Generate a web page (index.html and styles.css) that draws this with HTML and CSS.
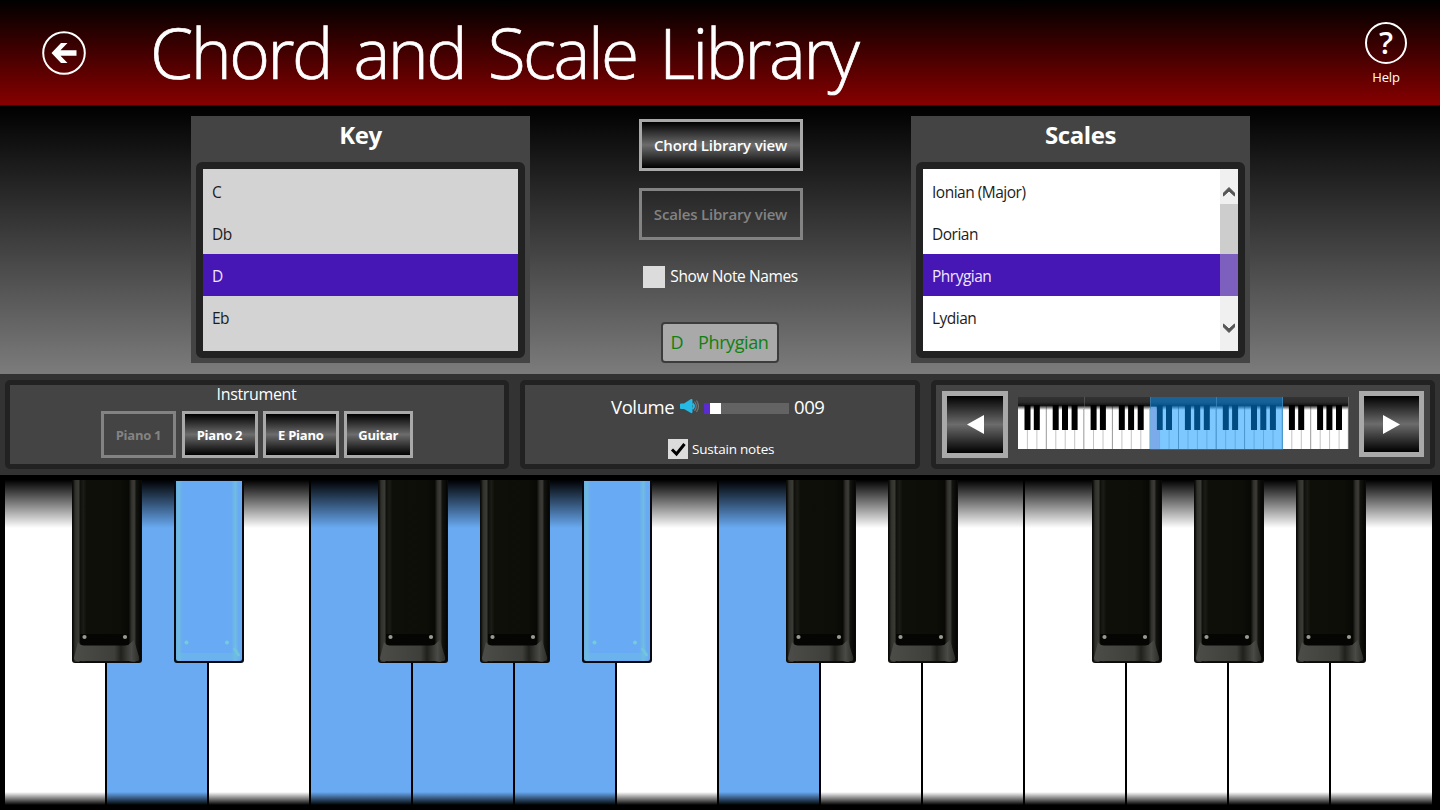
FILE: index.html
```html
<!DOCTYPE html>
<html lang="en">
<head>
    <meta charset="UTF-8">
    <meta name="viewport" content="width=device-width, initial-scale=1.0">
    <title>Chord and Scale Library</title>
    <link rel="stylesheet" href="styles.css">
</head>
<body>
    <!-- shared shapes -->
    <svg class="defs" width="0" height="0">
        <defs>
            <linearGradient id="body-dark" x1="0" x2="1" y1="0" y2="0">
                <stop offset="0" stop-color="#0b0b09"/>
                <stop offset="0.03" stop-color="#2f2f2b"/>
                <stop offset="0.08" stop-color="#3b3b36"/>
                <stop offset="0.11" stop-color="#10100c"/>
                <stop offset="0.15" stop-color="#1c1c17"/>
                <stop offset="0.2" stop-color="#0e0f08"/>
                <stop offset="0.7" stop-color="#0d0e08"/>
                <stop offset="0.82" stop-color="#080805"/>
                <stop offset="0.86" stop-color="#302f2b"/>
                <stop offset="0.9" stop-color="#3e3e39"/>
                <stop offset="0.93" stop-color="#12120f"/>
                <stop offset="1" stop-color="#050504"/>
            </linearGradient>
            <linearGradient id="body-lit" x1="0" x2="1" y1="0" y2="0">
                <stop offset="0" stop-color="#6ab2e6"/>
                <stop offset="0.04" stop-color="#6fbbe0"/>
                <stop offset="0.1" stop-color="#69aaf4"/>
                <stop offset="0.84" stop-color="#69aaf4"/>
                <stop offset="0.9" stop-color="#6fbde0"/>
                <stop offset="0.95" stop-color="#69aaf4"/>
                <stop offset="1" stop-color="#69aaf4"/>
            </linearGradient>
            <linearGradient id="lip" x1="0" x2="1" y1="0" y2="0">
                <stop offset="0" stop-color="#4c4c48"/>
                <stop offset="0.62" stop-color="#3e3e3a"/>
                <stop offset="0.72" stop-color="#20201c"/>
                <stop offset="0.88" stop-color="#4a4a46"/>
                <stop offset="1" stop-color="#2c2c28"/>
            </linearGradient>
            <linearGradient id="mini-shade" x1="0" x2="0" y1="0" y2="1">
                <stop offset="0" stop-color="#333"/>
                <stop offset="0.4" stop-color="#2c2c2c"/>
                <stop offset="0.65" stop-color="#101010"/>
                <stop offset="1" stop-color="#222" stop-opacity="0"/>
            </linearGradient>
        </defs>
        <symbol id="key-dark" viewBox="0 0 70 183">
            <path d="M0 0H70V180Q70 183 67 183H3Q0 183 0 180Z" fill="#0a0a08"/>
            <path d="M1 0H69V179Q69 182 66 182H4Q1 182 1 179Z" fill="url(#body-dark)"/>
            <path d="M6 162L9 165H56L62 160L67 177Q68 181 65 181H5Q2 181 2 178Z" fill="url(#lip)"/>
            <path d="M8 154H57V162Q57 165.500 53 165.500H12Q8 165.500 8 161Z" fill="#050503"/>
            <circle cx="12.5" cy="157" r="2.100" fill="#9a9a92"/>
            <circle cx="53" cy="157" r="2.100" fill="#9a9a92"/>
        </symbol>
        <symbol id="key-lit" viewBox="0 0 70 183">
            <path d="M0 0H70V180Q70 183 67 183H3Q0 183 0 180Z" fill="#060a10"/>
            <path d="M2 1H68V179Q68 181 66 181H4Q2 181 2 179Z" fill="url(#body-lit)"/>
            <path d="M4 173H66V180H4Z" fill="#6ebbe4" opacity="0.5"/>
            <path d="M60 168L65 176" stroke="#72c6da" stroke-width="3"/>
            <circle cx="12.5" cy="162.500" r="2" fill="#73cdd8"/>
            <circle cx="53" cy="162.500" r="2" fill="#73cdd8"/>
        </symbol>
        <symbol id="octave" viewBox="0 0 66.1 52">
            <rect width="66.1" height="52" fill="#fff"/>
            <path d="M9.400 8V52M18.900 8V52M37.800 8V52M47.200 8V52M56.700 8V52" stroke="#c4c4c4"/>
            <path d="M28.300 8V52" stroke="#999"/>
            <path d="M66 12V52" stroke="#777"/>
            <rect width="66.1" height="13" fill="url(#mini-shade)"/>
            <path d="M6.500 8H12.500V33H6.500ZM15.800 8H21.800V33H15.800ZM34.700 8H40.700V33H34.700ZM44 8H50V33H44ZM53.600 8H59.600V33H53.600Z" fill="#000"/>
        </symbol>
    </svg>

    <header class="header">
        <svg class="back" viewBox="0 0 44 44">
            <circle cx="22" cy="22" r="20.8" fill="none" stroke="#fff" stroke-width="2"/>
            <path d="M9.500 22L19 12H25.500L18.500 19.300H34.500V24.700H18.500L25.500 32H19Z" fill="#fff"/>
        </svg>
        <h1>Chord and Scale Library</h1>
        <div class="help">
            <div class="help-icon">?</div>
            <span>Help</span>
        </div>
    </header>

    <main class="library">
        <section class="panel">
            <h2>Key</h2>
            <div class="list list-key">
                <div class="item">C</div>
                <div class="item">Db</div>
                <div class="item selected">D</div>
                <div class="item">Eb</div>
            </div>
        </section>

        <section class="views">
            <button class="btn view-btn">Chord Library view</button>
            <button class="btn view-btn disabled">Scales Library view</button>
            <div class="check check-names"><span class="box"></span><span>Show Note Names</span></div>
            <div class="current"><span>D</span><span>Phrygian</span></div>
        </section>

        <section class="panel">
            <h2>Scales</h2>
            <div class="list list-scales">
                <div class="item">Ionian (Major)</div>
                <div class="item">Dorian</div>
                <div class="item selected">Phrygian</div>
                <div class="item">Lydian</div>
                <div class="scrollbar">
                    <svg class="arrow" viewBox="0 0 18 35"><path d="M3.500 27V24L9 18.500L14.500 24V27L9 22Z" fill="#555" stroke="#555"/></svg>
                    <div class="thumb"></div>
                    <svg class="arrow arrow-down" viewBox="0 0 18 35"><path d="M3.500 27V24L9 18.500L14.500 24V27L9 22Z" fill="#555" stroke="#555"/></svg>
                </div>
            </div>
        </section>
    </main>

    <div class="controls">
        <section class="box-panel instrument">
            <div class="label">Instrument</div>
            <div class="buttons">
                <button class="btn piano1 disabled">Piano 1</button>
                <button class="btn piano2">Piano 2</button>
                <button class="btn epiano">E Piano</button>
                <button class="btn guitar">Guitar</button>
            </div>
        </section>

        <section class="box-panel sound">
            <div class="volume">
                <span class="volume-label">Volume</span>
                <svg class="speaker" viewBox="0 0 21 18">
                    <path d="M1 7.500Q1 6.500 2 6.500H5L12 2Q13.500 1.500 13.500 3V15Q13.500 16.500 12 16L5 12H2Q1 12 1 11Z" fill="#25b9e6"/>
                    <path d="M13.500 6.500Q16.500 9 13.500 12" fill="none" stroke="#25b9e6" stroke-width="2"/>
                    <path d="M15.500 4.500Q19 9 15.500 14M17.500 3.500Q21.500 9 17.500 15" fill="none" stroke="#777" stroke-width="1.200"/>
                </svg>
                <div class="slider"><div class="fill"></div><div class="knob"></div></div>
                <span class="volume-value">009</span>
            </div>
            <div class="check check-sustain">
                <span class="box"><svg viewBox="0 0 20 20"><path d="M4 10.500L8.500 15L16.500 5" fill="none" stroke="#000" stroke-width="3"/></svg></span>
                <span>Sustain notes</span>
            </div>
        </section>

        <section class="box-panel range">
            <button class="btn nav"><svg viewBox="0 0 17 19"><path d="M0 9.500L17 0V19Z" fill="#fff"/></svg></button>
            <svg class="mini" viewBox="0 0 331 54">
                <use href="#octave" x="0" y="0" width="66.1" height="52"/>
                <use href="#octave" x="66.1" y="0" width="66.1" height="52"/>
                <use href="#octave" x="132.2" y="0" width="66.1" height="52"/>
                <use href="#octave" x="198.3" y="0" width="66.1" height="52"/>
                <use href="#octave" x="264.4" y="0" width="66.1" height="52"/>
                <rect x="132.200" y="0" width="132.800" height="53" fill="#0096ff" fill-opacity="0.51"/>
                <path d="M133 10H138.500V33H142V52H133Z" fill="#7aa6e6" fill-opacity="0.85"/>
            </svg>
            <button class="btn nav nav-next"><svg viewBox="0 0 17 19"><path d="M17 9.500L0 0V19Z" fill="#fff"/></svg></button>
        </section>
    </div>

    <div class="piano">
        <div class="white"><svg class="black"><use href="#key-dark"/></svg></div>
        <div class="white lit"><svg class="black"><use href="#key-lit"/></svg></div>
        <div class="white"></div>
        <div class="white lit"><svg class="black"><use href="#key-dark"/></svg></div>
        <div class="white lit"><svg class="black"><use href="#key-dark"/></svg></div>
        <div class="white lit"><svg class="black"><use href="#key-lit"/></svg></div>
        <div class="white"></div>
        <div class="white lit"><svg class="black"><use href="#key-dark"/></svg></div>
        <div class="white"><svg class="black"><use href="#key-dark"/></svg></div>
        <div class="white"></div>
        <div class="white"><svg class="black"><use href="#key-dark"/></svg></div>
        <div class="white"><svg class="black"><use href="#key-dark"/></svg></div>
        <div class="white"><svg class="black"><use href="#key-dark"/></svg></div>
        <div class="white last"></div>
    </div>
</body>
</html>
```
FILE: styles.css
```css
* {
    box-sizing: border-box;
}
body {
    margin: 0;
    width: 1440px;
    height: 810px;
    overflow: hidden;
    display: flex;
    flex-direction: column;
    font-family: "Open Sans", "Noto Sans", sans-serif;
    background: #000;
    color: #fff;
}
svg {
    display: block;
}
.defs {
    position: absolute;
}

/* header */
.header {
    height: 106px;
    flex: none;
    display: flex;
    align-items: flex-start;
    background: linear-gradient(#000 0, #860000 100%);
    border-bottom: 1px solid #300;
    padding-left: 42px;
}
.back {
    width: 44px;
    height: 44px;
    margin-top: 31px;
}
.header h1 {
    margin: 3px 0 0 64px;
    font-size: 69.5px;
    line-height: 98px;
    font-weight: 300;
    letter-spacing: -2.5px;
    word-spacing: 7px;
    -webkit-text-stroke: 0.7px #fff;
    white-space: nowrap;
    flex: 1;
}
.help {
    width: 60px;
    margin: 22px 24px 0 0;
    display: flex;
    flex-direction: column;
    align-items: center;
    font-size: 13px;
    line-height: 18px;
    letter-spacing: -0.2px;
}
.help-icon {
    width: 42px;
    height: 42px;
    border: 2px solid #fff;
    border-radius: 50%;
    margin-bottom: 4px;
    text-align: center;
    font-size: 31px;
    line-height: 37px;
    font-weight: 600;
}

/* library */
.library {
    height: 268px;
    flex: none;
    display: flex;
    align-items: flex-start;
    justify-content: space-between;
    padding: 10px 190px 0 191px;
    background: linear-gradient(#000, #7c7c7c);
}
.panel {
    width: 339px;
    height: 247px;
    padding: 0 5px;
    background: #444;
}
.panel h2 {
    margin: 0;
    height: 46px;
    font-size: 24px;
    line-height: 37px;
    font-weight: 700;
    letter-spacing: -0.4px;
    text-align: center;
}
.list {
    position: relative;
    height: 196px;
    border: 7px solid #222;
    border-radius: 6px;
    padding-top: 0.5px;
    overflow: hidden;
    color: #1c1c1c;
}
.list-key {
    background: #d3d3d3;
}
.list-scales {
    background: #fff;
}
.item {
    height: 42.1px;
    padding-left: 9px;
    font-size: 15.5px;
    line-height: 44.5px;
    letter-spacing: -0.5px;
}
.selected {
    background: #4617b4;
    color: #f0e6ff;
}
.scrollbar {
    position: absolute;
    top: 0;
    right: 0;
    width: 18px;
    height: 182px;
    display: flex;
    flex-direction: column;
    background: linear-gradient(#f0f0f0 85px, transparent 85px, transparent 127px, #f0f0f0 127px);
}
.arrow {
    width: 18px;
    height: 35px;
    flex: none;
}
.thumb {
    height: 92px;
    background: linear-gradient(#cdcdcd 50px, rgba(205, 205, 205, 0.4) 50px);
}
.arrow-down {
    margin-top: 20px;
    transform: scaleY(-1);
}
.views {
    width: 164px;
    padding-top: 3px;
    display: flex;
    flex-direction: column;
    align-items: center;
}
.btn {
    border: 3px solid #a9a9a9;
    padding: 0;
    color: #fff;
    font-family: inherit;
    font-weight: 600;
    background: linear-gradient(#000, #6c6c6c 50%, #000);
    white-space: nowrap;
}
.btn.disabled {
    border-color: #838383;
    background: none;
    color: #838383;
}
.view-btn {
    width: 164px;
    height: 52px;
    margin-bottom: 17px;
    font-size: 15px;
    letter-spacing: -0.18px;
}
.check {
    display: flex;
    align-items: center;
    white-space: nowrap;
}
.check .box {
    background: #dcdcdc;
}
.check-names {
    margin-top: 8px;
    font-size: 15.5px;
    line-height: 23px;
    letter-spacing: -0.4px;
    gap: 5px;
    height: 23px;
}
.check-names .box {
    width: 22px;
    height: 22px;
}
.current {
    width: 118px;
    height: 41px;
    margin: 34px 2px 0 0;
    display: flex;
    justify-content: space-between;
    padding: 0 8px;
    border: 2px solid #3c3c3c;
    border-radius: 4px;
    background: #a9a9a9;
    color: #108010;
    font-size: 18px;
    line-height: 36px;
    letter-spacing: -0.4px;
}

/* controls */
.controls {
    height: 101px;
    flex: none;
    display: flex;
    gap: 11px;
    padding: 6px 5px 5px;
    background: #333;
}
.box-panel {
    height: 89px;
    border: 5px solid #222;
    border-radius: 5px;
    background: #444;
}
.instrument {
    width: 504px;
}
.label {
    height: 26px;
    padding-right: 1px;
    text-align: center;
    font-size: 16px;
    line-height: 18px;
    letter-spacing: -0.35px;
}
.buttons {
    display: flex;
    gap: 5.5px;
    padding-left: 91px;
}
.buttons .btn {
    height: 47px;
    font-size: 13px;
    font-weight: 700;
    letter-spacing: -0.25px;
}
.piano1 {
    width: 75px;
}
.piano2 {
    width: 76px;
}
.epiano {
    width: 75.5px;
}
.guitar {
    width: 68.5px;
}
.sound {
    width: 400px;
    display: flex;
    flex-direction: column;
}
.volume {
    display: flex;
    align-items: center;
    height: 42px;
    padding-left: 86px;
    font-size: 18.5px;
    letter-spacing: -0.4px;
}
.volume-label {
    width: 68px;
}
.speaker {
    width: 21px;
    height: 18px;
}
.slider {
    position: relative;
    width: 85px;
    height: 11px;
    margin: 4px 5px 0 4px;
    background: #636363;
}
.fill {
    width: 6px;
    height: 11px;
    background: #5a2bd0;
}
.knob {
    position: absolute;
    left: 6px;
    top: 0;
    width: 11px;
    height: 11px;
    background: #fff;
}
.check-sustain {
    height: 20px;
    margin-top: 12px;
    padding-left: 143px;
    gap: 4px;
    font-size: 13.5px;
    line-height: 18px;
    letter-spacing: -0.2px;
}
.check-sustain .box {
    width: 20px;
    height: 20px;
}
.range {
    width: 504px;
    display: flex;
    align-items: flex-start;
    padding: 6px 6px 0;
}
.nav {
    width: 66px;
    height: 67px;
    border-width: 5px;
    display: flex;
    align-items: center;
    justify-content: center;
    flex: none;
}
.nav svg {
    width: 17px;
    height: 19px;
}
.mini {
    width: 331px;
    height: 54px;
    margin: 6px 10px 0 10px;
    flex: none;
}
.nav-next {
    width: 65px;
    height: 66px;
}

/* piano */
.piano {
    height: 335px;
    display: flex;
    padding: 5px 7px 5px 5px;
    position: relative;
    background: #000;
}
.white {
    position: relative;
    width: 102px;
    height: 325px;
    flex: none;
    border-right: 2px solid #000;
    background: linear-gradient(#000 0, rgba(0, 0, 0, 0) 48px, rgba(0, 0, 0, 0) 312px, #000 325px) #fff;
}
.white.lit {
    background-color: #69aaf2;
}
.white.last {
    border-right: 0;
    width: 101px;
}
.black {
    position: absolute;
    left: 67px;
    top: 0;
    width: 70px;
    height: 183px;
    z-index: 1;
}
```
